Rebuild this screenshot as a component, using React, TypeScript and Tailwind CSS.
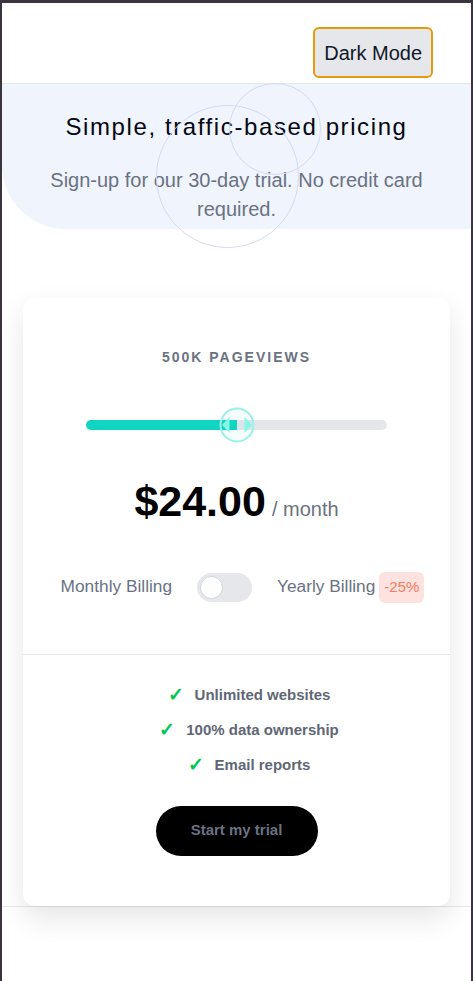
import { useState } from "react";

const features = ["Unlimited websites", "100% data ownership", "Email reports"];

const Thumb = () => (
  <svg width="36" height="36" viewBox="0 0 36 36" className="absolute left-1/2 top-1/2 -translate-x-1/2 -translate-y-1/2">
    <circle cx="18" cy="18" r="16.5" fill="rgba(16,213,194,0.04)" stroke="#9af0e6" strokeWidth="2" />
    <path d="M10.5 10 L10.5 26 L3 18 Z" fill="#84f7e7" />
    <path d="M25.5 10 L25.5 26 L33 18 Z" fill="#84f7e7" />
  </svg>
);

export default function App() {
  const [yearly, setYearly] = useState(false);
  const [value] = useState(50);

  return (
    <div className="min-h-[981px] border-t-[3px] border-x-2 border-[#3b3340] bg-white font-['Liberation_Sans',Arial,sans-serif]">
      <header className="flex justify-end border-b border-gray-200 pt-6 pb-[5px] pr-[38px]">
        <button className="h-[51px] rounded-md border-2 border-[#e59b0c] bg-gray-200 px-[9px] text-[20px] text-gray-900">
          Dark Mode
        </button>
      </header>

      {/* hero */}
      <section className="relative overflow-hidden rounded-bl-[64px] bg-[#eff4fd] px-6 pt-[27px] pb-[5px] text-center">
        <h1 className="relative text-[24px] leading-8 tracking-[1.6px] text-gray-950">Simple, traffic-based pricing</h1>
        <p className="relative mx-auto mt-[23px] max-w-[400px] text-[20px] leading-[29px] text-gray-500">
          Sign-up for our 30-day trial. No credit card required.
        </p>
      </section>

      <div className="relative">
        <div className="pointer-events-none absolute left-[227px] top-[-146px] h-[92px] w-[92px] rounded-full border border-[#d6daf2]" />
        <div className="pointer-events-none absolute left-[154px] top-[-124px] h-[143px] w-[143px] rounded-full border border-[#d6daf2]" />
      </div>

      <main className="border-b border-gray-200 px-[21px] pt-[69px]">
        <div className="rounded-xl bg-white shadow-[0_12px_28px_rgba(0,0,0,0.1)]">
          <div className="pt-[51px] pb-[51px] text-center">
            <div className="text-sm font-bold leading-4 tracking-[2px] text-gray-500">500K PAGEVIEWS</div>

            <div className="relative mx-[63px] mt-[43px] flex h-[34px] items-center">
              <div className="h-[10px] w-full overflow-hidden rounded-full bg-gray-200">
                <div className="h-full bg-[#10d5c2]" style={{ width: `${value}%` }} />
              </div>
              <Thumb />
            </div>

            <div className="mt-[35px] flex items-baseline justify-center gap-[6px]">
              <span className="text-[43px] font-bold leading-[48px] text-black">{yearly ? "$18.00" : "$24.00"}</span>
              <span className="text-[20px] text-gray-500">/ month</span>
            </div>

            <div className="mt-[47px] flex items-center justify-center whitespace-nowrap pl-[12px] text-[17.3px] text-gray-500">
              <span>Monthly Billing</span>
              <button
                onClick={() => setYearly(!yearly)}
                className="mx-[25px] flex h-[29px] w-[55px] items-center rounded-full bg-gray-200 px-[3px]"
              >
                <span className="h-[23px] w-[23px] rounded-full border border-gray-300 bg-white" />
              </button>
              <span>Yearly Billing</span>
              <span className="ml-1 rounded-md bg-[#fee2e0] px-[5px] py-[4px] text-[15px] text-[#f97c5f]">-25%</span>
            </div>
          </div>

          <div className="border-t border-gray-200 pt-[31px] pb-[50px] text-center">
            <ul className="flex flex-col items-center gap-[18px] pl-[25px]">
              {features.map((f) => (
                <li key={f} className="flex items-center gap-[11px] text-[15px] font-bold leading-[17px] text-[#5f6775]">
                  <span className="text-[19px] font-bold text-green-500">✓</span>
                  {f}
                </li>
              ))}
            </ul>
            <button className="mt-[33px] h-[50px] w-[162px] rounded-full bg-black text-[15px] font-bold text-gray-500">
              Start my trial
            </button>
          </div>
        </div>
      </main>
    </div>
  );
}
